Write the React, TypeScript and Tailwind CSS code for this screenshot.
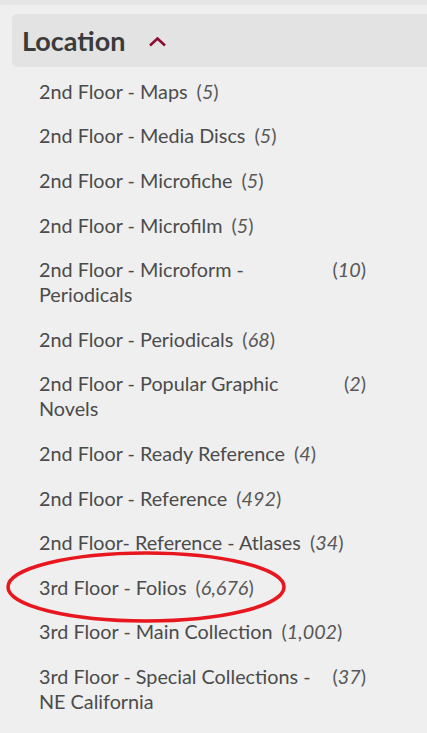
const items: { label: string; count: string }[] = [
  { label: '2nd Floor - Maps', count: '5' },
  { label: '2nd Floor - Media Discs', count: '5' },
  { label: '2nd Floor - Microfiche', count: '5' },
  { label: '2nd Floor - Microfilm', count: '5' },
  { label: '2nd Floor - Microform - Periodicals', count: '10' },
  { label: '2nd Floor - Periodicals', count: '68' },
  { label: '2nd Floor - Popular Graphic Novels', count: '2' },
  { label: '2nd Floor - Ready Reference', count: '4' },
  { label: '2nd Floor - Reference', count: '492' },
  { label: '2nd Floor- Reference - Atlases', count: '34' },
  { label: '3rd Floor - Folios', count: '6,676' },
  { label: '3rd Floor - Main Collection', count: '1,002' },
  { label: '3rd Floor - Special Collections - NE California', count: '37' },
];

export default function App() {
  return (
    <div className="relative w-[427px] h-[733px] overflow-hidden bg-[#efefef] font-['Lato',sans-serif]">
      <div className="h-[5px] bg-[#e6e6e6]" />
      <div className="pt-[9px] pl-[12px]">
        <div className="flex items-center h-[53px] rounded-l-[5px] bg-[#e3e3e3] pl-[10px]">
          <span className="text-[27px] font-bold text-[#3b3b3b] leading-none">Location</span>
          <svg className="ml-[23px] mt-[2px]" width="19" height="11" viewBox="0 0 19 11">
            <path d="M2 9.5 L9.5 2.5 L17 9.5" fill="none" stroke="#8b0d31" strokeWidth="2.6" />
          </svg>
        </div>
      </div>
      <ul className="pl-[39px] w-[366px] pt-[2px]">
        {items.map((it) => (
          <li key={it.label} className="flex items-start py-[9.8px] text-[19.8px] leading-[25px] text-[#4b4b4b]">
            <span className="min-w-0">{it.label}</span>
            <span className="shrink-0 ml-[9px] text-[#585858]">
              (<span className="italic">{it.count}</span>)
            </span>
          </li>
        ))}
      </ul>
      <svg className="absolute left-0 top-0 pointer-events-none" width="427" height="733">
        <ellipse cx="146" cy="587" rx="138" ry="34" fill="none" stroke="#e8161f" strokeWidth="3.5" />
      </svg>
    </div>
  );
}
